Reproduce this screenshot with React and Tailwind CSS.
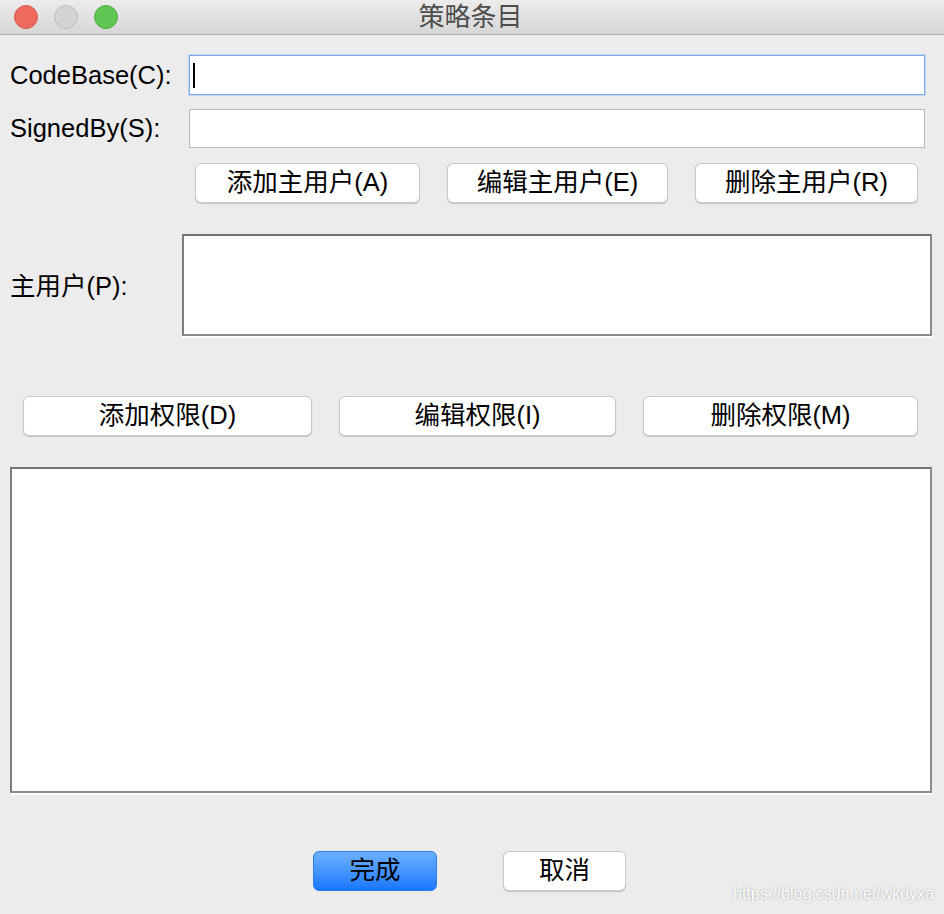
import React from "react";

const FONT = { fontFamily: '"Liberation Sans", "Noto Sans CJK SC", sans-serif' };

function MacButton({ children, className = "" }) {
  return (
    <button
      className={`h-[40px] rounded-[6px] bg-white border border-[#c9c9c9] shadow-[0_1px_1px_rgba(0,0,0,0.18)] text-[25.5px] leading-none text-black flex items-center justify-center ${className}`}
    >
      {children}
    </button>
  );
}

function SunkenList({ className = "" }) {
  return (
    <div
      className={`bg-white border-2 border-[#8c8c8c] border-t-[#727272] border-l-[#7c7c7c] shadow-[0_2px_0_#ffffff] ${className}`}
    />
  );
}

export default function App() {
  return (
    <div className="w-[944px] h-[914px] bg-[#ececec] flex flex-col overflow-hidden relative" style={FONT}>
      {/* title bar */}
      <div className="h-[35px] shrink-0 bg-gradient-to-b from-[#ececec] to-[#d6d6d6] border-b border-[#b4b4b4] flex items-center relative">
        <div className="flex items-center gap-[16px] pl-[14px]">
          <span className="w-[24px] h-[24px] rounded-full bg-[#ee6a5f] border border-[#d8574c]" />
          <span className="w-[24px] h-[24px] rounded-full bg-[#d4d4d4] border border-[#bdbdbd]" />
          <span className="w-[24px] h-[24px] rounded-full bg-[#62c655] border border-[#4eac43]" />
        </div>
        <div className="absolute inset-0 flex items-center justify-center pr-[3px] text-[26px] text-[#4d4d4d] leading-none">
          策略条目
        </div>
      </div>

      {/* CodeBase */}
      <div className="flex items-center mt-[20px] h-[40px]">
        <div className="w-[189px] pl-[10px] text-[25.5px] text-black">CodeBase(C):</div>
        <div className="w-[736px] h-[40px] bg-white border border-[#7eaaf0] shadow-[0_0_0_1px_rgba(126,170,240,0.35)] flex items-center pl-[3px]">
          <span className="w-[2px] h-[25px] bg-black" />
        </div>
      </div>

      {/* SignedBy */}
      <div className="flex items-center mt-[14px] h-[39px]">
        <div className="w-[189px] pl-[10px] text-[25.5px] text-black">SignedBy(S):</div>
        <div className="w-[736px] h-[39px] bg-white border border-[#b9b9b9]" />
      </div>

      {/* principal buttons */}
      <div className="flex mt-[15px] pl-[195px] gap-[27px]">
        <MacButton className="w-[225px]">添加主用户(A)</MacButton>
        <MacButton className="w-[221px]">编辑主用户(E)</MacButton>
        <MacButton className="w-[223px]">删除主用户(R)</MacButton>
      </div>

      {/* principals list */}
      <div className="flex items-center mt-[31px]">
        <div className="w-[182px] pl-[10px] text-[25.5px] text-black pt-[2px]">主用户(P):</div>
        <SunkenList className="w-[750px] h-[102px]" />
      </div>

      {/* permission buttons */}
      <div className="flex mt-[60px] pl-[23px] gap-[27px]">
        <MacButton className="w-[289px]">添加权限(D)</MacButton>
        <MacButton className="w-[277px]">编辑权限(I)</MacButton>
        <MacButton className="w-[275px]">删除权限(M)</MacButton>
      </div>

      {/* permissions list */}
      <div className="mt-[31px] pl-[10px]">
        <SunkenList className="w-[922px] h-[326px]" />
      </div>

      {/* bottom buttons */}
      <div className="flex mt-[58px] pl-[313px] gap-[66px]">
        <button className="w-[124px] h-[40px] rounded-[6px] bg-gradient-to-b from-[#6cb0ff] to-[#1676ff] border border-[#2a7ef0] text-[25.5px] leading-none text-black flex items-center justify-center">
          完成
        </button>
        <MacButton className="w-[123px]">取消</MacButton>
      </div>

      {/* watermark */}
      <div className="absolute right-[10px] bottom-[12px] text-[16px] leading-none text-white [text-shadow:0_0_2px_rgba(0,0,0,0.35)]">
        https://blog.csdn.net/wkdyxa
      </div>
    </div>
  );
}
